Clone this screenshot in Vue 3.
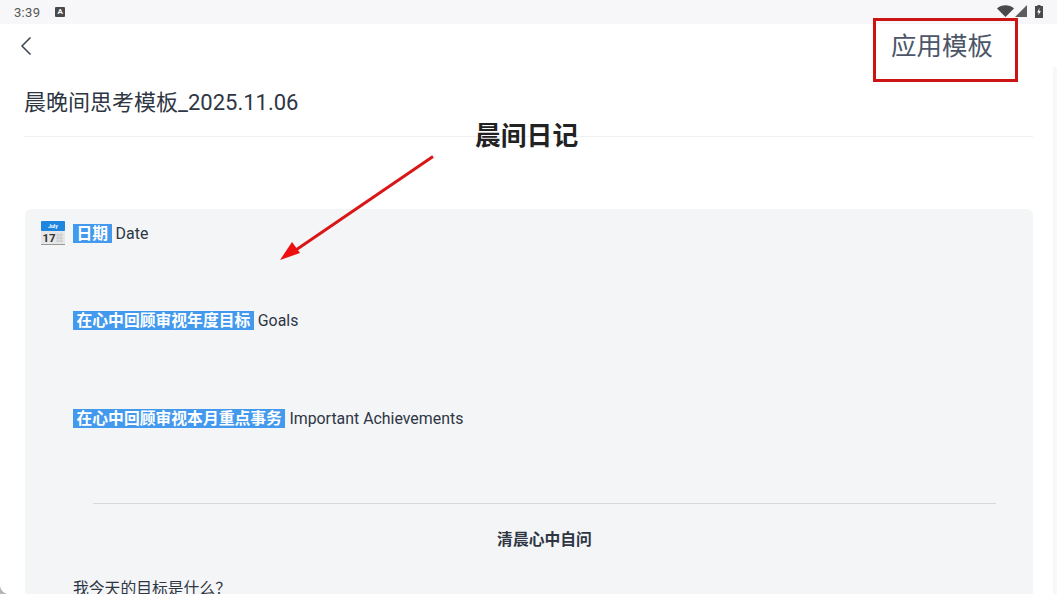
<template>
  <div class="screen">
    <div class="status">
      <div class="status-left">
        <span class="time">3:39</span>
        <span class="a-badge">A</span>
      </div>
      <div class="status-right">
        <svg width="17" height="12" viewBox="0 0 17 12"><path d="M0 3.500 C4.500 -0.800 12.500 -0.800 17 3.500 L8.500 12 Z" fill="#4a4a4a" /></svg>
        <svg width="12" height="12" viewBox="0 0 12 12"><path d="M12 0 V12 H0 Z" fill="#5c5c5c" /></svg>
        <svg class="battery" width="8" height="13" viewBox="0 0 8 13"><path d="M2.500 0 H5.500 V1 H8 V13 H0 V1 H2.500 Z" fill="#4a4a4a" /><path d="M4.600 2.800 L2.200 7.400 H3.800 L3.300 10.600 L5.800 6 H4.200 Z" fill="#fff" /></svg>
      </div>
    </div>

    <header class="nav">
      <svg class="back" width="14" height="20" viewBox="0 0 14 20"><path d="M11.500 1.500 L3 10 L11.500 18.500" fill="none" stroke="#3a4352" stroke-width="1.500" /></svg>
      <button class="apply">应用模板</button>
    </header>

    <h1 class="title">晨晚间思考模板_2025.11.06</h1>

    <section class="card">
      <div class="row row-date">
        <svg class="cal" width="26" height="26" viewBox="0 0 26 26">
          <rect x="1" y="1" width="24" height="24" rx="1.500" fill="#e6e6e6" />
          <rect x="1" y="1" width="24" height="10" rx="1" fill="#1f86e0" />
          <rect x="1" y="24" width="24" height="1" fill="#999" />
          <text x="13" y="8" class="cal-month">July</text>
          <text x="2.500" y="22" class="cal-day">17</text>
          <path d="M16 15h7M16 18h7M16 21h7M18 13v9M21 13v9" stroke="#c4c4c4" stroke-width="0.800" fill="none" />
        </svg>
        <span class="mark">日期</span>
        <span class="label">Date</span>
      </div>
      <div class="row row-goals">
        <span class="mark">在心中回顾审视年度目标</span>
        <span class="label">Goals</span>
      </div>
      <div class="row row-month">
        <span class="mark">在心中回顾审视本月重点事务</span>
        <span class="label">Important Achievements</span>
      </div>
      <hr class="rule" />
      <h2 class="sub">清晨心中自问</h2>
      <p class="question">我今天的目标是什么？</p>
    </section>

    <div class="note-box"></div>
    <div class="note-text">晨间日记</div>
    <svg class="arrow" width="160" height="110" viewBox="0 0 160 110">
      <path d="M153 1.500 L10 99" stroke="#d81818" stroke-width="3" fill="none" />
      <path d="M0 105 L12 87 L20 98 Z" fill="#ee0f0f" />
    </svg>
    <svg class="corner" width="8" height="8" viewBox="0 0 8 8"><path d="M0 0 Q1 6 7 8 H0 Z" fill="#b5b5b5" /></svg>
    <div class="edge"></div>
  </div>
</template>

<script setup>
</script>

<style>
html, body { margin: 0; background: #fff; overflow: hidden; }
</style>

<style scoped>
.screen {
  position: relative;
  width: 1057px;
  height: 594px;
  overflow: hidden;
  background: #fff;
  font-family: Roboto, "Noto Sans CJK SC", sans-serif;
  color: #2b3340;
}
.status {
  height: 24px;
  background: #f7f7f9;
  display: flex;
  align-items: center;
  justify-content: space-between;
  padding: 0 14px 0 14px;
}
.status-left { display: flex; align-items: center; gap: 15px; }
.time { font-size: 13px; color: #555; letter-spacing: 0.3px; }
.a-badge {
  width: 10px;
  height: 10px;
  background: #4a4a4a;
  color: #fff;
  font-size: 8px;
  font-weight: 700;
  line-height: 10px;
  text-align: center;
  border-radius: 1px;
}
.status-right { display: flex; align-items: center; gap: 1px; margin-top: -2px; }
.battery { margin-left: 7px; }
.nav {
  height: 44px;
  display: flex;
  align-items: center;
  justify-content: space-between;
  padding: 0 64px 0 19px;
}
.back { margin-top: -1px; }
.apply {
  border: 0;
  padding: 0;
  background: none;
  font: inherit;
  font-size: 25.5px;
  line-height: 44px;
  color: #4c5668;
}
.title {
  margin: 19px 24px 0;
  height: 49px;
  border-bottom: 1px solid #eeeff1;
  font-size: 22px;
  font-weight: 400;
  line-height: 31px;
  color: #2e3644;
}
.card {
  margin: 72px 24px 0 25px;
  background: #f4f5f7;
  border-radius: 6px;
  padding: 11px 37px 0 48px;
  height: 500px;
}
.row { display: flex; align-items: center; height: 26px; }
.row-date { position: relative; }
.cal { position: absolute; left: -33px; top: 0; }
.cal-month { font: 700 5px Roboto, sans-serif; fill: #fff; text-anchor: middle; }
.cal-day { font: 700 11.500px Roboto, sans-serif; fill: #333; }
.row-goals { margin-top: 61px; }
.row-month { margin-top: 72px; }
.mark {
  background: #4299ee;
  color: #fff;
  font-size: 15.800px;
  font-weight: 700;
  line-height: 19px;
  padding: 0 3.500px;
  margin-right: 4px;
}
.label { font-size: 15.900px; color: #2e3644; }
.rule {
  margin: 72px 0 0 20px;
  border: 0;
  border-top: 1px solid #d6d8db;
}
.sub {
  margin: 25px 0 0 20px;
  font-size: 15.800px;
  font-weight: 700;
  line-height: 22px;
  text-align: center;
  color: #2e3644;
}
.question {
  margin: 27px 0 0;
  font-size: 15.800px;
  line-height: 22px;
  color: #2e3644;
}
.note-box {
  position: absolute;
  left: 873px;
  top: 18px;
  width: 145px;
  height: 64px;
  box-sizing: border-box;
  border: 3px solid #cc1414;
}
.note-text {
  position: absolute;
  left: 475px;
  top: 119px;
  font-size: 25.800px;
  font-weight: 700;
  line-height: 34px;
  color: #222;
}
.arrow { position: absolute; left: 280px; top: 155px; }
.corner { position: absolute; left: 0; top: 586px; }
.edge {
  position: absolute;
  right: 0;
  top: 67px;
  width: 4px;
  height: 527px;
  background: #f8f8f9;
}
</style>
